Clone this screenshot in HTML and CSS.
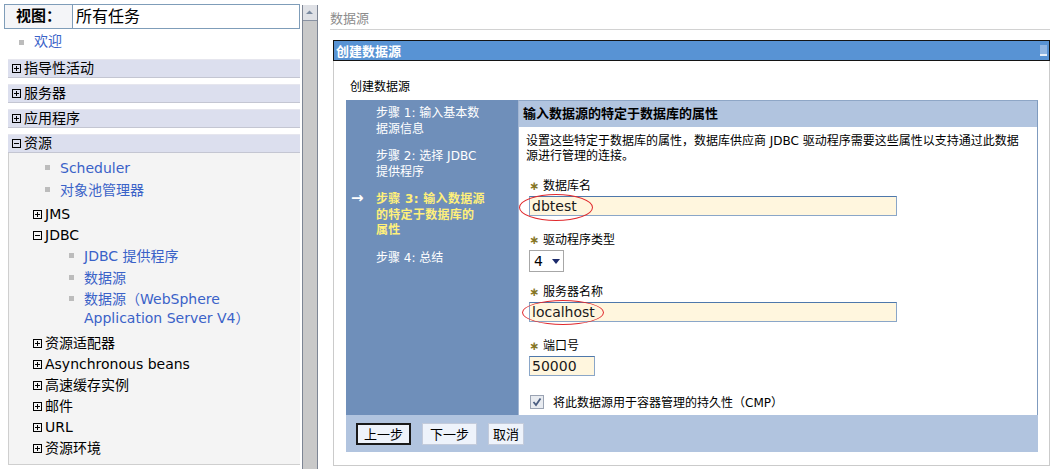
FILE: index.html
```html
<!DOCTYPE html>
<html lang="zh-CN">
<head>
  <meta charset="UTF-8" />
  <title>数据源 - 创建数据源</title>
  <link rel="stylesheet" href="styles.css">
</head>
<body>
  <div class="frame">
    <!-- Navigation tree -->
    <div class="nav">
      <div class="view-row">
        <span class="view-label">视图：</span>
        <span class="view-select">所有任务</span>
      </div>
      <div class="welcome"><span class="bullet"></span><a class="link">欢迎</a></div>

      <div class="cat"><svg class="tog" viewBox="0 0 9 9"><rect x=".5" y=".5" width="8" height="8"/><path d="M2 4.5H7M4.5 2V7"/></svg>指导性活动</div>
      <div class="cat"><svg class="tog" viewBox="0 0 9 9"><rect x=".5" y=".5" width="8" height="8"/><path d="M2 4.5H7M4.5 2V7"/></svg>服务器</div>
      <div class="cat"><svg class="tog" viewBox="0 0 9 9"><rect x=".5" y=".5" width="8" height="8"/><path d="M2 4.5H7M4.5 2V7"/></svg>应用程序</div>
      <div class="cat cat-open"><svg class="tog" viewBox="0 0 9 9"><rect x=".5" y=".5" width="8" height="8"/><path d="M2 4.5H7"/></svg>资源</div>

      <div class="cat-body">
        <ul class="leaves lvl1">
          <li><span class="bullet"></span><a class="link">Scheduler</a></li>
          <li><span class="bullet"></span><a class="link">对象池管理器</a></li>
        </ul>
        <div class="node node-gap"><svg class="tog" viewBox="0 0 9 9"><rect x=".5" y=".5" width="8" height="8"/><path d="M2 4.5H7M4.5 2V7"/></svg>JMS</div>
        <div class="node"><svg class="tog" viewBox="0 0 9 9"><rect x=".5" y=".5" width="8" height="8"/><path d="M2 4.5H7"/></svg>JDBC</div>
        <ul class="leaves lvl2">
          <li><span class="bullet"></span><a class="link">JDBC 提供程序</a></li>
          <li><span class="bullet"></span><a class="link">数据源</a></li>
          <li><span class="bullet"></span><a class="link">数据源（WebSphere Application Server V4）</a></li>
        </ul>
        <div class="node node-gap"><svg class="tog" viewBox="0 0 9 9"><rect x=".5" y=".5" width="8" height="8"/><path d="M2 4.5H7M4.5 2V7"/></svg>资源适配器</div>
        <div class="node"><svg class="tog" viewBox="0 0 9 9"><rect x=".5" y=".5" width="8" height="8"/><path d="M2 4.5H7M4.5 2V7"/></svg>Asynchronous beans</div>
        <div class="node"><svg class="tog" viewBox="0 0 9 9"><rect x=".5" y=".5" width="8" height="8"/><path d="M2 4.5H7M4.5 2V7"/></svg>高速缓存实例</div>
        <div class="node"><svg class="tog" viewBox="0 0 9 9"><rect x=".5" y=".5" width="8" height="8"/><path d="M2 4.5H7M4.5 2V7"/></svg>邮件</div>
        <div class="node"><svg class="tog" viewBox="0 0 9 9"><rect x=".5" y=".5" width="8" height="8"/><path d="M2 4.5H7M4.5 2V7"/></svg>URL</div>
        <div class="node"><svg class="tog" viewBox="0 0 9 9"><rect x=".5" y=".5" width="8" height="8"/><path d="M2 4.5H7M4.5 2V7"/></svg>资源环境</div>
      </div>
    </div>
    <div class="scrollbar">
      <div class="scroll-up"><svg viewBox="0 0 13 15" width="13" height="15"><path d="M3 9L6.5 5.5L10 9Z" fill="#7a8aa0"/></svg></div>
    </div>
  </div>

  <!-- Main content -->
  <div class="main">
    <div class="crumb">数据源</div>

    <div class="panel">
      <div class="panel-title">
        <span>创建数据源</span>
        <span class="minimize"></span>
      </div>
      <div class="panel-body">
        <div class="body-label">创建数据源</div>

        <div class="wizard">
          <div class="steps">
            <div class="step">步骤 1: 输入基本数据源信息</div>
            <div class="step">步骤 2: 选择 JDBC 提供程序</div>
            <div class="step current"><span class="arrow">→</span>步骤 3: 输入数据源<br>的特定于数据库的<br>属性</div>
            <div class="step">步骤 4: 总结</div>
          </div>

          <div class="step-content">
            <div class="content-head">输入数据源的特定于数据库的属性</div>
            <div class="form">
              <p class="desc">设置这些特定于数据库的属性，数据库供应商 JDBC 驱动程序需要这些属性以支持通过此数据源进行管理的连接。</p>

              <div class="field">
                <label><span class="req">∗</span> 数据库名</label>
                <div class="input-wrap">
                  <input class="text-input" type="text" value="dbtest" />
                  <span class="mark mark-db"></span>
                </div>
              </div>

              <div class="field">
                <label><span class="req">∗</span> 驱动程序类型</label>
                <div class="select-box">4 <svg viewBox="0 0 8 5" width="8" height="5"><path d="M0 0H8L4 5Z" fill="#1b2a6b"/></svg></div>
              </div>

              <div class="field after-select">
                <label><span class="req">∗</span> 服务器名称</label>
                <div class="input-wrap">
                  <input class="text-input" type="text" value="localhost" />
                  <span class="mark mark-host"></span>
                </div>
              </div>

              <div class="field">
                <label><span class="req">∗</span> 端口号</label>
                <input class="text-input port" type="text" value="50000" />
              </div>

              <div class="check-row">
                <span class="checkbox"><svg viewBox="0 0 14 14" width="14" height="14"><path d="M3.5 7L6 10L10.5 3.5" fill="none" stroke="#4a5d80" stroke-width="1.8"/></svg></span>
                <span>将此数据源用于容器管理的持久性（CMP）</span>
              </div>
            </div>
          </div>

          <div class="button-bar">
            <button class="btn btn-step btn-default">上一步</button>
            <button class="btn btn-step">下一步</button>
            <button class="btn">取消</button>
          </div>
        </div>
      </div>
    </div>
  </div>
</body>
</html>
```

FILE: styles.css
```css
body {
  margin: 0;
  display: flex;
  height: 469px;
  overflow: hidden;
  font-family: "DejaVu Sans", "Noto Sans CJK SC", sans-serif;
  background-color: #ffffff;
  color: #000000;
}

/* Navigation frame */
.frame {
  display: flex;
  width: 318px;
  flex-shrink: 0;
}

.nav {
  width: 292px;
  padding: 4px 2px 0 8px;
  font-size: 14px;
}

.view-row {
  display: flex;
  margin-left: -4px;
  height: 23px;
  border: 1px solid #7f9db9;
  background-color: #f4f5f8;
}

.view-label {
  width: 56px;
  padding-left: 11px;
  font-weight: bold;
  font-size: 15px;
  line-height: 23px;
}

.view-select {
  flex: 1;
  background-color: #ffffff;
  border-left: 1px solid #7f9db9;
  padding-left: 3px;
  font-size: 16px;
  line-height: 23px;
}

.link {
  color: #3a62c8;
}

.bullet {
  display: inline-block;
  width: 5px;
  height: 5px;
  background-color: #bcbcbc;
  margin-right: 10px;
  vertical-align: middle;
}

.welcome {
  padding-left: 11px;
  line-height: 19px;
  margin-top: 3px;
  margin-bottom: 8px;
}

.cat {
  display: flex;
  align-items: center;
  height: 17px;
  margin-bottom: 6px;
  padding-left: 4px;
  background-color: #dcdfee;
  border-top: 1px solid #e6e6ee;
  border-bottom: 1px solid #c4c6d2;
  line-height: 17px;
}

.cat-open {
  margin-bottom: 0;
}

.tog {
  width: 9px;
  height: 9px;
  margin-right: 3px;
  flex-shrink: 0;
}

.tog rect,
.tog path {
  fill: none;
  stroke: #000000;
  stroke-width: 1;
}

.cat-body {
  background-color: #f4f4f4;
  border-left: 1px solid #cfcfcf;
  border-bottom: 1px solid #cfcfcf;
  padding: 5px 0 5px;
}

.leaves {
  list-style: none;
  margin: 0;
  padding: 0;
}

.leaves li {
  display: flex;
  align-items: baseline;
  line-height: 19px;
  padding: 1.25px 0;
}

.leaves li .bullet {
  flex-shrink: 0;
  position: relative;
  top: -3px;
}

.lvl1 {
  padding-left: 36px;
}

.lvl2 {
  padding-left: 60px;
}

.node {
  display: flex;
  align-items: center;
  padding-left: 24px;
  line-height: 19px;
  padding-top: 1px;
  padding-bottom: 1px;
}

.node-gap {
  margin-top: 3px;
}

.scrollbar {
  width: 14px;
  margin-top: 5px;
  background-color: #c9c9c9;
  border-left: 1px solid #7d8594;
  border-right: 1px solid #7d8594;
}

.scroll-up {
  height: 15px;
  background-color: #dfe1e6;
  border-bottom: 1px solid #8a93a3;
}

/* Main area */
.main {
  flex: 1;
  padding-left: 12px;
  padding-right: 1px;
}

.crumb {
  font-size: 13px;
  color: #8c8c8c;
  padding-top: 11px;
  line-height: 16px;
  padding-bottom: 2px;
  border-bottom: 1px solid #d2d2d2;
}

.panel {
  margin: 10px 0 0 3px;
}

.panel-title {
  display: flex;
  justify-content: space-between;
  align-items: center;
  height: 19px;
  padding-left: 2px;
  background-color: #5893d4;
  border: 1px solid #141414;
  color: #ffffff;
  font-size: 13px;
  font-weight: bold;
}

.minimize {
  width: 7px;
  height: 9px;
  margin-right: 2px;
  background-color: #90b6e3;
  border-bottom: 2px solid #e8f0fa;
}

.panel-body {
  border-left: 1px solid #cbcbcb;
  border-right: 1px solid #cbcbcb;
  border-bottom: 1px solid #cbcbcb;
  padding: 19px 10px 13px 12px;
}

.body-label {
  font-size: 12px;
  line-height: 15px;
  padding-left: 4px;
  margin-bottom: 5px;
}

/* Wizard */
.wizard {
  display: grid;
  grid-template-columns: 172px 1fr;
  grid-template-rows: 315px 37px;
  width: 692px;
  font-size: 12px;
}

.steps {
  background-color: #6f8fba;
  padding: 6px 0 0 30px;
  color: #ffffff;
}

.step {
  position: relative;
  width: 114px;
  line-height: 15.5px;
  margin-bottom: 12px;
}

.step.current {
  color: #fff07a;
  font-weight: bold;
  letter-spacing: 0.3px;
}

.arrow {
  position: absolute;
  left: -25px;
  top: -1px;
  color: #ffffff;
  font-size: 15px;
  font-weight: bold;
}

.step-content {
  background-color: #ffffff;
  border-top: 1px solid #8ea6c6;
  border-right: 1px solid #7f9bbf;
  border-left: 1px solid #a3b6d2;
}

.content-head {
  height: 26px;
  line-height: 26px;
  padding-left: 4px;
  background-color: #b1c4df;
  font-size: 13px;
  font-weight: bold;
}

.form {
  padding: 7px 16px 0 7px;
}

.desc {
  margin: 0;
  line-height: 15px;
}

.field {
  margin-top: 15px;
  padding-left: 3px;
}

.field + .field {
  margin-top: 17px;
}

.field.after-select {
  margin-top: 13px;
}

.field label {
  display: block;
  line-height: 15px;
  margin-bottom: 2px;
}

.req {
  color: #857624;
  font-weight: bold;
}

.input-wrap {
  position: relative;
  width: 368px;
}

.text-input {
  box-sizing: border-box;
  width: 368px;
  height: 20px;
  margin: 0;
  padding: 0 2px;
  background-color: #fff6de;
  border: 1px solid #8aa6c8;
  border-top-color: #4e78ab;
  font-family: "DejaVu Sans", sans-serif;
  font-size: 14px;
  color: #1a1a1a;
}

.text-input.port {
  width: 66px;
}

.mark {
  position: absolute;
  border: 1px solid #e0282c;
  border-radius: 50%;
}

.mark-db {
  left: -10px;
  top: -2px;
  width: 72px;
  height: 25px;
}

.mark-host {
  left: -7px;
  top: -2px;
  width: 80px;
  height: 23px;
}

.select-box {
  box-sizing: border-box;
  display: flex;
  align-items: center;
  gap: 9px;
  width: 35px;
  height: 22px;
  padding-left: 4px;
  border: 1px solid #a7a7a7;
  font-size: 14px;
}

.check-row {
  display: flex;
  align-items: center;
  gap: 9px;
  margin-top: 17px;
  padding-left: 4px;
}

.checkbox {
  width: 14px;
  height: 14px;
  box-sizing: border-box;
  border: 1px solid #9aa3b3;
  background-color: #e8ebf0;
  display: flex;
}

.checkbox svg {
  margin: -1px;
}

.button-bar {
  grid-column: 1 / 3;
  display: flex;
  align-items: center;
  gap: 11px;
  padding-left: 10px;
  background-color: #b1c4df;
}

.btn {
  height: 22px;
  padding: 0 4px;
  background-color: #eef3fb;
  border: 1px solid #c3cbdb;
  font-family: "Noto Sans CJK SC", sans-serif;
  font-size: 13px;
  line-height: 18px;
  color: #000000;
  cursor: pointer;
}

.btn-step {
  width: 55px;
}

.btn-default {
  border: 2px solid #1a1a1a;
}
```
